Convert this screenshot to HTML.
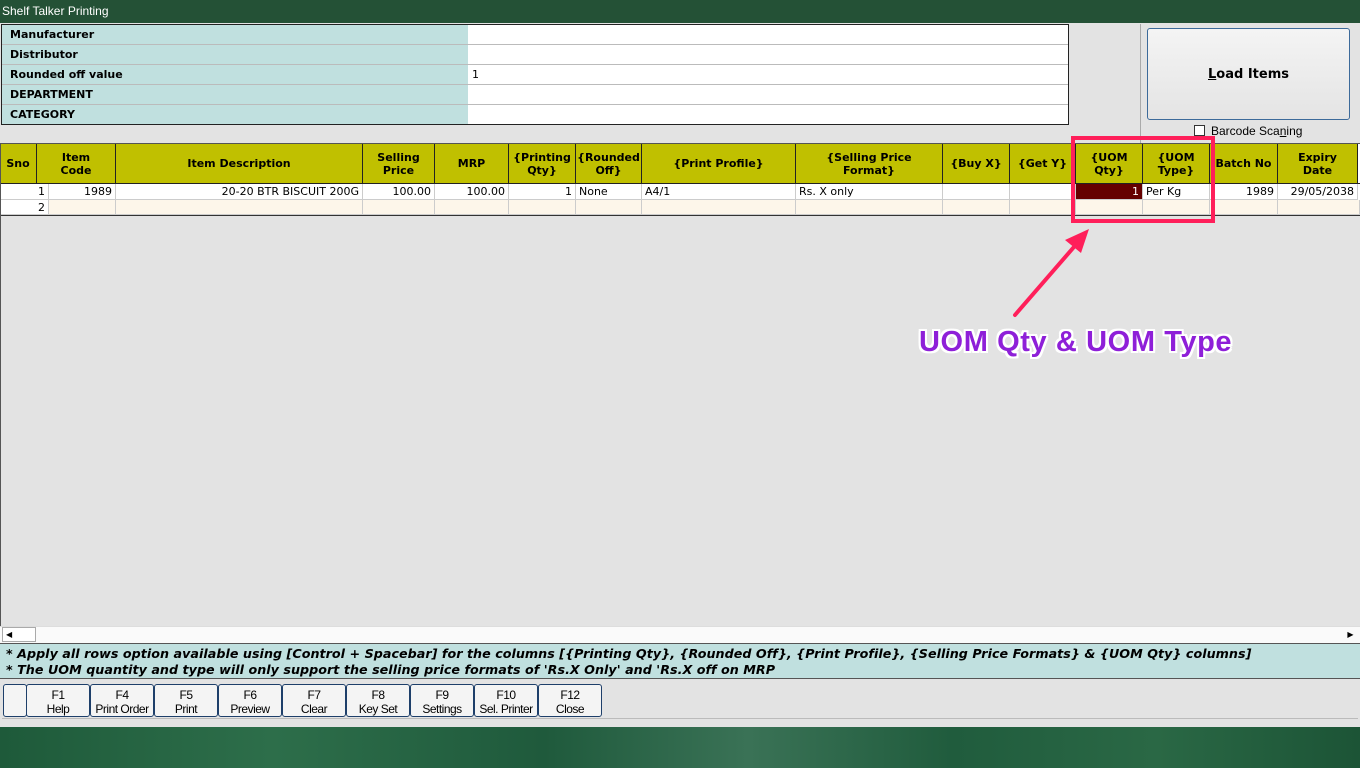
<!DOCTYPE html>
<html><head><style>
body{margin:0;width:1360px;height:768px;position:relative;overflow:hidden;background:#e3e3e3;font-family:"DejaVu Sans","Liberation Sans",sans-serif;font-size:11px}
.a{position:absolute;box-sizing:border-box}
.title{left:0;top:0;width:1360px;height:23px;background:#245136;color:#fff;font-family:"Liberation Sans",sans-serif;font-size:12px;padding:4px 2px}
.lab{background:#c0e0df;font-weight:bold;padding:3px 8px;border-bottom:1px solid #bbb;height:20px}
.val{background:#fff;border-bottom:1px solid #bbb;height:20px;padding:3px 4px}
.h{background:#c0c000;border-right:1px solid #222;font-weight:bold;text-align:center;display:flex;align-items:center;justify-content:center;line-height:13px;top:144px;height:39px}
.c{height:16px;border-right:1px solid #ccc;border-bottom:1px solid #ccc;padding:1px 3px;white-space:nowrap;line-height:14px}
.r{text-align:right}
.btn{top:684px;height:33px;width:64px;border:1px solid #1e3f6a;border-radius:3px;background:#f4f4f4;text-align:center;font-family:"Liberation Sans",sans-serif;font-size:12px;line-height:14px;padding-top:3px;letter-spacing:-0.5px}
</style></head><body>
<div class="a title">Shelf Talker Printing</div>
<div class="a" style="left:1px;top:24px;width:1068px;height:101px;border:1px solid #222;background:#fff"></div>
<div class="a lab" style="left:2px;top:25px;width:466px">Manufacturer</div><div class="a val" style="left:468px;top:25px;width:600px"></div>
<div class="a lab" style="left:2px;top:45px;width:466px">Distributor</div><div class="a val" style="left:468px;top:45px;width:600px"></div>
<div class="a lab" style="left:2px;top:65px;width:466px">Rounded off value</div><div class="a val" style="left:468px;top:65px;width:600px">1</div>
<div class="a lab" style="left:2px;top:85px;width:466px">DEPARTMENT</div><div class="a val" style="left:468px;top:85px;width:600px"></div>
<div class="a lab" style="left:2px;top:105px;width:466px;border:0;height:19px">CATEGORY</div><div class="a val" style="left:468px;top:105px;width:600px;border:0;height:19px"></div>
<div class="a" style="left:1140px;top:24px;width:1px;height:119px;background:#aaa"></div>
<div class="a" style="left:1147px;top:28px;width:203px;height:92px;border:1px solid #3c6a9a;border-radius:3px;background:linear-gradient(#f4f4f4,#e4e4e4);display:flex;align-items:center;justify-content:center;font-weight:bold;font-size:13px"><span><u>L</u>oad Items</span></div>
<div class="a" style="left:1194px;top:125px;width:11px;height:11px;border:1px solid #333;background:#fff"></div>
<div class="a" style="left:1211px;top:124px;font-size:12px;font-family:'Liberation Sans',sans-serif">Barcode Sca<u>n</u>ing</div>
<div class="a" style="left:0;top:143px;width:1360px;height:1px;background:#555"></div>
<div class="a" style="left:0;top:144px;width:1360px;height:72px;background:#fff"></div>
<div class="a h" style="left:0;width:37px">Sno</div>
<div class="a h" style="left:37px;width:79px">Item<br>Code</div>
<div class="a h" style="left:116px;width:247px">Item Description</div>
<div class="a h" style="left:363px;width:72px">Selling<br>Price</div>
<div class="a h" style="left:435px;width:74px">MRP</div>
<div class="a h" style="left:509px;width:67px">{Printing<br>Qty}</div>
<div class="a h" style="left:576px;width:66px">{Rounded<br>Off}</div>
<div class="a h" style="left:642px;width:154px">{Print Profile}</div>
<div class="a h" style="left:796px;width:147px">{Selling Price<br>Format}</div>
<div class="a h" style="left:943px;width:67px">{Buy X}</div>
<div class="a h" style="left:1010px;width:66px">{Get Y}</div>
<div class="a h" style="left:1076px;width:67px">{UOM<br>Qty}</div>
<div class="a h" style="left:1143px;width:67px">{UOM<br>Type}</div>
<div class="a h" style="left:1210px;width:68px">Batch No</div>
<div class="a h" style="left:1278px;width:80px">Expiry<br>Date</div>
<div class="a" style="left:0;top:183px;width:1360px;height:1px;background:#222"></div>
<div class="a c r" style="left:0;top:184px;width:49px">1</div>
<div class="a c r" style="left:49px;top:184px;width:67px">1989</div>
<div class="a c r" style="left:116px;top:184px;width:247px">20-20 BTR BISCUIT 200G</div>
<div class="a c r" style="left:363px;top:184px;width:72px">100.00</div>
<div class="a c r" style="left:435px;top:184px;width:74px">100.00</div>
<div class="a c r" style="left:509px;top:184px;width:67px">1</div>
<div class="a c" style="left:576px;top:184px;width:66px">None</div>
<div class="a c" style="left:642px;top:184px;width:154px">A4/1</div>
<div class="a c" style="left:796px;top:184px;width:147px">Rs. X only</div>
<div class="a c" style="left:943px;top:184px;width:67px"></div>
<div class="a c" style="left:1010px;top:184px;width:66px"></div>
<div class="a c r" style="left:1076px;top:184px;width:67px;background:#650000;color:#fff">1</div>
<div class="a c" style="left:1143px;top:184px;width:67px">Per Kg</div>
<div class="a c r" style="left:1210px;top:184px;width:68px">1989</div>
<div class="a c r" style="left:1278px;top:184px;width:80px">29/05/2038</div>
<div class="a c r" style="left:0;top:200px;width:49px;height:15px">2</div>
<div class="a c" style="left:49px;top:200px;width:67px;height:15px;background:#fdf6ea"></div>
<div class="a c" style="left:116px;top:200px;width:247px;height:15px;background:#fdf6ea"></div>
<div class="a c" style="left:363px;top:200px;width:72px;height:15px;background:#fdf6ea"></div>
<div class="a c" style="left:435px;top:200px;width:74px;height:15px;background:#fdf6ea"></div>
<div class="a c" style="left:509px;top:200px;width:67px;height:15px;background:#fdf6ea"></div>
<div class="a c" style="left:576px;top:200px;width:66px;height:15px;background:#fdf6ea"></div>
<div class="a c" style="left:642px;top:200px;width:154px;height:15px;background:#fdf6ea"></div>
<div class="a c" style="left:796px;top:200px;width:147px;height:15px;background:#fdf6ea"></div>
<div class="a c" style="left:943px;top:200px;width:67px;height:15px;background:#fdf6ea"></div>
<div class="a c" style="left:1010px;top:200px;width:66px;height:15px;background:#fdf6ea"></div>
<div class="a c" style="left:1076px;top:200px;width:67px;height:15px;background:#fdf6ea"></div>
<div class="a c" style="left:1143px;top:200px;width:67px;height:15px;background:#fdf6ea"></div>
<div class="a c" style="left:1210px;top:200px;width:68px;height:15px;background:#fdf6ea"></div>
<div class="a c" style="left:1278px;top:200px;width:82px;height:15px;background:#fdf6ea"></div>
<div class="a" style="left:0;top:215px;width:1360px;height:1px;background:#333"></div>
<div class="a" style="left:0;top:143px;width:1px;height:500px;background:#555"></div>
<div class="a" style="left:0;top:626px;width:1360px;height:17px;background:#fafafa;border-top:1px solid #ddd"></div>
<div class="a" style="left:2px;top:627px;width:34px;height:15px;border:1px solid #aaa;background:#fff;font-size:8px;line-height:13px;padding-left:3px">◀</div>
<div class="a" style="left:1343px;top:627px;width:15px;height:15px;font-size:8px;line-height:15px;text-align:center">▶</div>
<div class="a" style="left:0;top:643px;width:1360px;height:36px;background:#c0e0df;border-top:1px solid #555;border-bottom:1px solid #555;font-weight:bold;font-style:italic;font-size:12.7px;line-height:16px;padding:2px 6px;white-space:nowrap;letter-spacing:0.03px">* Apply all rows option available using [Control + Spacebar] for the columns [{Printing Qty}, {Rounded Off}, {Print Profile}, {Selling Price Formats} &amp; {UOM Qty} columns]<br>* The UOM quantity and type will only support the selling price formats of 'Rs.X Only' and 'Rs.X off on MRP</div>
<div class="a" style="left:2px;top:684px;width:1356px;height:35px;border-bottom:1px solid #bbb"></div>
<div class="a btn" style="left:3px;width:24px"></div>
<div class="a btn" style="left:26px">F1<br>Help</div>
<div class="a btn" style="left:90px">F4<br>Print Order</div>
<div class="a btn" style="left:154px">F5<br>Print</div>
<div class="a btn" style="left:218px">F6<br>Preview</div>
<div class="a btn" style="left:282px">F7<br>Clear</div>
<div class="a btn" style="left:346px">F8<br>Key Set</div>
<div class="a btn" style="left:410px">F9<br>Settings</div>
<div class="a btn" style="left:474px">F10<br>Sel. Printer</div>
<div class="a btn" style="left:538px">F12<br>Close</div>
<div class="a" style="left:0;top:727px;width:1360px;height:41px;background:linear-gradient(90deg,#1e5a3a,#2d6e4a 20%,#1f5a3c 40%,#3a7256 55%,#205c3d 70%,#2a6845 85%,#1c5436)"></div>
<div class="a" style="left:1071px;top:136px;width:144px;height:87px;border:4px solid #ff1f5a"></div>
<svg class="a" style="left:0;top:0" width="1360" height="768"><line x1="1015" y1="315" x2="1080" y2="240" stroke="#ff1f5a" stroke-width="4" stroke-linecap="round"/><polygon points="1089,229 1065,240 1081,253" fill="#ff1f5a"/></svg>
<div class="a" style="left:919px;top:326px;font-family:'Liberation Sans',sans-serif;font-weight:bold;font-size:29px;letter-spacing:0.6px;color:#8e1fd8;white-space:nowrap;text-shadow:-2px -2px 0 #fff,2px -2px 0 #fff,-2px 2px 0 #fff,2px 2px 0 #fff,0 2px 0 #fff,0 -2px 0 #fff,2px 0 0 #fff,-2px 0 0 #fff">UOM Qty &amp; UOM Type</div>
</body></html>
